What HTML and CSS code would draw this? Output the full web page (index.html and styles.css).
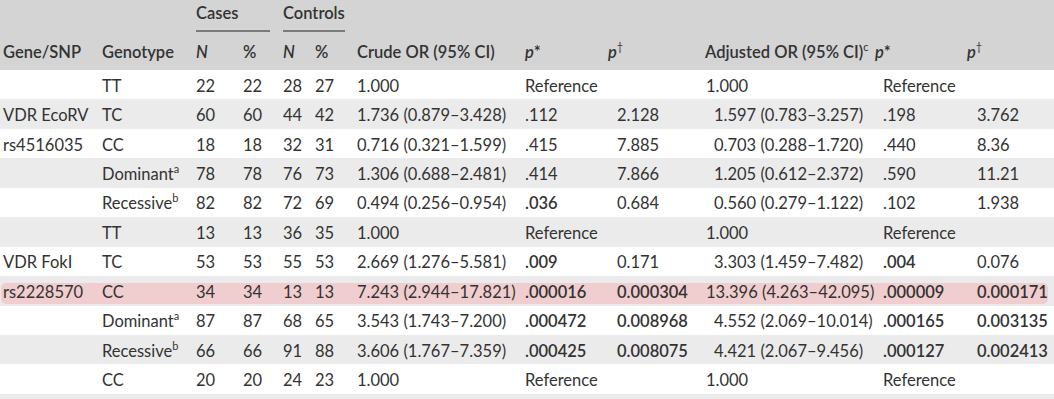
FILE: index.html
```html
<!DOCTYPE html>
<html>
<head>
<meta charset="utf-8">
<link rel="stylesheet" href="styles.css">
</head>
<body>
<div class="wrap">
<table class="tbl">
<colgroup>
<col class="w1"><col class="w2"><col class="w3"><col class="w4"><col class="w5"><col class="w6">
<col class="w7"><col class="w8"><col class="w9"><col class="w10"><col class="w11"><col class="w12">
</colgroup>
<thead>
<tr class="h1">
<th></th><th></th>
<th colspan="2"><span class="grp grp-cases">Cases</span></th>
<th colspan="2"><span class="grp grp-ctrl">Controls</span></th>
<th></th><th></th><th></th><th></th><th></th><th></th>
</tr>
<tr class="h2">
<th>Gene/SNP</th><th>Genotype</th>
<th><i>N</i></th><th>%</th><th><i>N</i></th><th>%</th>
<th>Crude OR (95% CI)</th><th><i>p</i>*</th><th><i>p</i><sup class="dg">†</sup></th>
<th>Adjusted OR (95% CI)<sup class="sc">c</sup></th><th><i>p</i>*</th><th><i>p</i><sup class="dg">†</sup></th>
</tr>
</thead>
<tbody>
<tr><td></td><td>TT</td><td>22</td><td>22</td><td>28</td><td>27</td><td>1.000</td><td>Reference</td><td class="p2"></td><td class="a0">1.000</td><td class="p3">Reference</td><td class="p4"></td></tr>
<tr><td>VDR EcoRV</td><td>TC</td><td>60</td><td>60</td><td>44</td><td>42</td><td>1.736 (0.879–3.428)</td><td>.112</td><td class="p2">2.128</td><td class="a1">1.597 (0.783–3.257)</td><td class="p3">.198</td><td class="p4">3.762</td></tr>
<tr><td>rs4516035</td><td>CC</td><td>18</td><td>18</td><td>32</td><td>31</td><td>0.716 (0.321–1.599)</td><td>.415</td><td class="p2">7.885</td><td class="a1">0.703 (0.288–1.720)</td><td class="p3">.440</td><td class="p4">8.36</td></tr>
<tr><td></td><td>Dominant<sup class="sc">a</sup></td><td>78</td><td>78</td><td>76</td><td>73</td><td>1.306 (0.688–2.481)</td><td>.414</td><td class="p2">7.866</td><td class="a1">1.205 (0.612–2.372)</td><td class="p3">.590</td><td class="p4">11.21</td></tr>
<tr><td></td><td>Recessive<sup class="sc">b</sup></td><td>82</td><td>82</td><td>72</td><td>69</td><td>0.494 (0.256–0.954)</td><td class="b">.036</td><td class="p2">0.684</td><td class="a1">0.560 (0.279–1.122)</td><td class="p3">.102</td><td class="p4">1.938</td></tr>
<tr><td></td><td>TT</td><td>13</td><td>13</td><td>36</td><td>35</td><td>1.000</td><td>Reference</td><td class="p2"></td><td class="a0">1.000</td><td class="p3">Reference</td><td class="p4"></td></tr>
<tr><td>VDR FokI</td><td>TC</td><td>53</td><td>53</td><td>55</td><td>53</td><td>2.669 (1.276–5.581)</td><td class="b">.009</td><td class="p2">0.171</td><td class="a1">3.303 (1.459–7.482)</td><td class="p3 b">.004</td><td class="p4">0.076</td></tr>
<tr class="hlrow"><td>rs2228570</td><td>CC</td><td>34</td><td>34</td><td>13</td><td>13</td><td>7.243 (2.944–17.821)</td><td class="b">.000016</td><td class="p2 b">0.000304</td><td class="a0">13.396 (4.263–42.095)</td><td class="p3 b">.000009</td><td class="p4 b">0.000171</td></tr>
<tr><td></td><td>Dominant<sup class="sc">a</sup></td><td>87</td><td>87</td><td>68</td><td>65</td><td>3.543 (1.743–7.200)</td><td class="b">.000472</td><td class="p2 b">0.008968</td><td class="a1">4.552 (2.069–10.014)</td><td class="p3 b">.000165</td><td class="p4 b">0.003135</td></tr>
<tr><td></td><td>Recessive<sup class="sc">b</sup></td><td>66</td><td>66</td><td>91</td><td>88</td><td>3.606 (1.767–7.359)</td><td class="b">.000425</td><td class="p2 b">0.008075</td><td class="a1">4.421 (2.067–9.456)</td><td class="p3 b">.000127</td><td class="p4 b">0.002413</td></tr>
<tr><td></td><td>CC</td><td>20</td><td>20</td><td>24</td><td>23</td><td>1.000</td><td>Reference</td><td class="p2"></td><td class="a0">1.000</td><td class="p3">Reference</td><td class="p4"></td></tr>
<tr class="tail"><td colspan="12"></td></tr>
</tbody>
</table>
<div class="hl"></div>
</div>
</body>
</html>
```
FILE: styles.css
```css
html, body {
  margin: 0;
  padding: 0;
  overflow: hidden;
  background: #ffffff;
}
body {
  font-family: Lato, "Open Sans", sans-serif;
  font-size: 16.5px;
  color: #333333;
}
.wrap {
  position: relative;
  width: 1054px;
}
.tbl {
  border-collapse: collapse;
  table-layout: fixed;
  width: 1054px;
}
.w1 { width: 99px; }
.w2 { width: 94px; }
.w3 { width: 47px; }
.w4 { width: 40px; }
.w5 { width: 32px; }
.w6 { width: 42px; }
.w7 { width: 168px; }
.w8 { width: 83px; }
.w9 { width: 97px; }
.w10 { width: 170px; }
.w11 { width: 92px; }
.w12 { width: 90px; }

th, td {
  padding: 0 0 0 3px;
  text-align: left;
  white-space: nowrap;
  line-height: 20px;
}
thead tr { background: #d4d4d4; }
th {
  font-weight: 600;
  color: #333333;
}
.h1 th {
  height: 33px;
  vertical-align: top;
  padding-top: 3px;
  box-sizing: border-box;
}
.h2 th {
  height: 37px;
  vertical-align: middle;
  padding-top: 1px;
  box-sizing: border-box;
}
.grp {
  display: block;
  padding-bottom: 7px;
  border-bottom: 2px solid #7a7a7a;
}
.grp-cases { margin-right: 10px; }
.grp-ctrl { margin-right: 9px; }

tbody tr { height: 29.45px; }
tbody td {
  padding-top: 2px;
  box-sizing: border-box;
}
tbody tr:nth-child(even) { background: #ebebeb; }
.tail td { height: 29px; }

.p2 { padding-left: 12px; }
.a0 { padding-left: 4px; }
.a1 { padding-left: 12px; }
.p3 { padding-left: 11px; }
.p4 { padding-left: 13px; }
.b { font-weight: 600; }

.sc {
  font-size: 11px;
  line-height: 0;
  vertical-align: 7px;
  font-weight: 400;
}
.dg {
  font-size: 11px;
  line-height: 0;
  vertical-align: 7px;
  font-weight: 400;
}
i { font-style: italic; }

.hlrow td {
  position: relative;
  z-index: 1;
}
.hl {
  position: absolute;
  left: 1px;
  top: 283px;
  width: 1047px;
  height: 21px;
  border-radius: 5px;
  background: #f0cdce;
  z-index: 0;
}
```
